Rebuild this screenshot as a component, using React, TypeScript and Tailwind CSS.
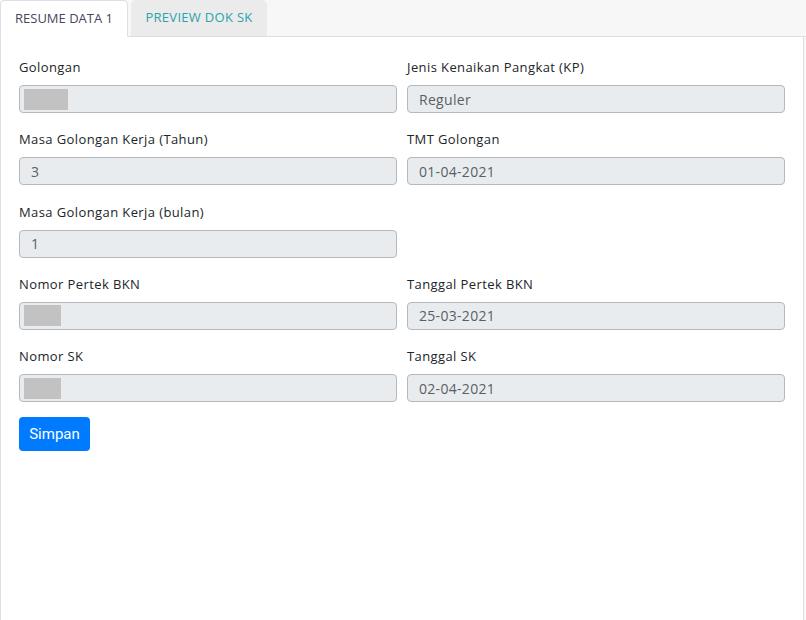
import React from "react";

const font = { fontFamily: '"Open Sans", "Noto Sans", sans-serif' };

function Field({ label, value, block }: { label: string; value?: string; block?: number }) {
  return (
    <div className="flex flex-col">
      <div className="text-[13px] leading-[20px] text-[#212529] h-[20px] tracking-[0.4px]">{label}</div>
      <div className="mt-[8px] h-[28px] rounded-[4px] border border-[#b5b9bd] bg-[#e9ecef] flex items-center">
        {block ? (
          <div className="h-[21px] bg-[#c2c2c2] ml-[4px]" style={{ width: block }} />
        ) : (
          <span className="pl-[11px] text-[14px] text-[#5a5f64] tracking-[0.3px]">{value}</span>
        )}
      </div>
    </div>
  );
}

export default function App() {
  return (
    <div className="w-[806px] h-[620px] bg-[#f7f7f7] flex flex-col" style={font}>
      <div className="flex h-[37px] border-b border-[#dcdfe3] relative">
        <div className="h-[37px] w-[128px] bg-white border border-[#dcdfe3] border-b-white rounded-t-[5px] flex items-center justify-center text-[13px] text-[#4b4560] mb-[-1px] relative z-10">
          RESUME DATA 1
        </div>
        <div className="ml-[3px] h-[36px] w-[136px] bg-[#ebebeb] rounded-t-[5px] flex items-center justify-center text-[13px] text-[#2aa3ac] tracking-[0.3px]">
          PREVIEW DOK SK
        </div>
      </div>
      <div className="flex-1 w-[804px] bg-white border-l border-r border-[#dcdfe3] px-[18px] pt-[20px]">
        <div className="grid grid-cols-2 gap-x-[10px] gap-y-[16.25px]">
          <Field label="Golongan" block={44} />
          <Field label="Jenis Kenaikan Pangkat (KP)" value="Reguler" />
          <Field label="Masa Golongan Kerja (Tahun)" value="3" />
          <Field label="TMT Golongan" value="01-04-2021" />
          <Field label="Masa Golongan Kerja (bulan)" value="1" />
          <div />
          <Field label="Nomor Pertek BKN" block={37} />
          <Field label="Tanggal Pertek BKN" value="25-03-2021" />
          <Field label="Nomor SK" block={37} />
          <Field label="Tanggal SK" value="02-04-2021" />
        </div>
        <button
          className="mt-[15px] h-[34px] w-[71px] rounded-[4px] bg-[#007bff] text-white text-[15px]"
          style={{ fontFamily: 'Roboto, "Noto Sans", sans-serif' }}
        >
          Simpan
        </button>
      </div>
    </div>
  );
}
